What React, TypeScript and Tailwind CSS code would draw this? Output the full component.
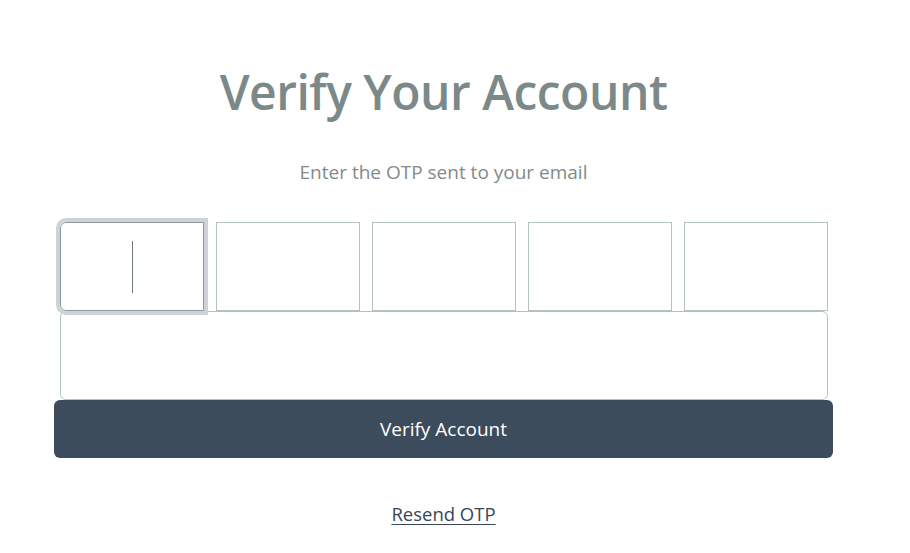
export default function App() {
  const boxes = [0, 1, 2, 3, 4];
  return (
    <div
      className="min-h-screen bg-white"
      style={{ fontFamily: '"Open Sans", "Noto Sans", sans-serif' }}
    >
      <div className="ml-[54px] w-[779px] pt-[57px] flex flex-col items-center">
        <h1 className="text-[48px] leading-[70px] font-semibold text-[#7b8a89] tracking-[-0.5px]">
          Verify Your Account
        </h1>
        <p className="mt-[32px] text-[19px] leading-[26px] text-[#828a8a]">
          Enter the OTP sent to your email
        </p>

        <div className="mt-[37px] w-[768px] flex flex-wrap gap-x-[12px]">
          {boxes.map((i) => (
            <div
              key={i}
              className={
                i === 0
                  ? "relative w-[144px] h-[89px] border border-[#8f989c] rounded-l-[6px] bg-white outline-[4px] outline outline-[#cfd3d7] flex items-center justify-center"
                  : "w-[144px] h-[89px] border border-[#b3c2bf] bg-white"
              }
            >
              {i === 0 && <div className="w-px h-[52px] bg-[#6f7a7a] ml-[2px]" />}
            </div>
          ))}
          <div className="w-[768px] h-[89px] border border-[#b3c2bf] rounded-[6px] bg-white" />
        </div>

        <button className="w-[779px] h-[58px] rounded-[6px] bg-[#3d4c5c] text-white text-[19px]">
          Verify Account
        </button>

        <a
          href="#"
          className="mt-[43px] text-[18.5px] leading-[26px] text-[#3a4654] underline underline-offset-[3px]"
        >
          Resend OTP
        </a>
      </div>
    </div>
  );
}
